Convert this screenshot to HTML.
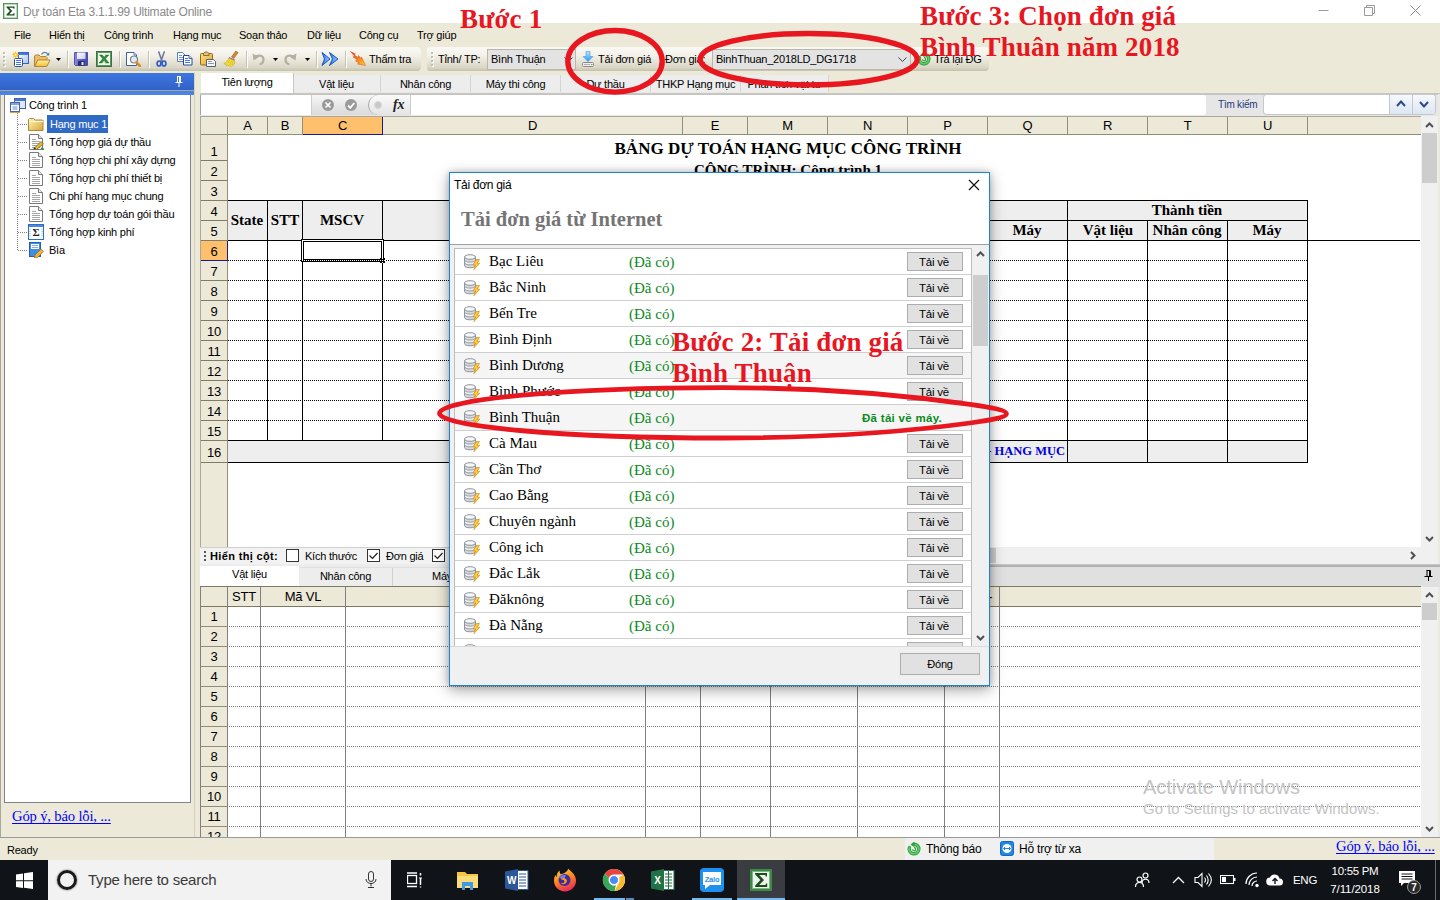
<!DOCTYPE html>
<html lang="vi"><head><meta charset="utf-8"><title>Dự toán Eta</title>
<style>
html,body{margin:0;padding:0}
body{width:1440px;height:900px;position:relative;overflow:hidden;background:#ECE9D8;font-family:"Liberation Sans",sans-serif;font-size:11px;color:#000;letter-spacing:-.22px}
.sf,.red,.th,.row .n,.row .s{letter-spacing:0}
.a{position:absolute}
.t{position:absolute;white-space:nowrap;line-height:14px;font-size:11px;letter-spacing:-.22px}
.sf{font-family:"Liberation Serif",serif}
.red{letter-spacing:.15px;position:absolute;white-space:nowrap;font-family:"Liberation Serif",serif;font-weight:bold;color:#E8161F;font-size:27px;line-height:30px;letter-spacing:.15px}
.ch{position:absolute;top:117px;height:17px;line-height:17px;text-align:center;font-size:13px;border-right:1px solid #918E79;box-sizing:border-box}
.rh{position:absolute;left:201px;width:27px;text-align:center;font-size:13px;border-bottom:1px solid #807D66;border-right:1px solid #918E79;box-sizing:border-box}
.th{position:absolute;font-family:"Liberation Serif",serif;font-weight:bold;font-size:15px;text-align:center;white-space:nowrap}
.tab{position:absolute;top:75px;height:17px;line-height:18px;text-align:center;font-size:11px;background:#EDEDED;border-right:1px solid #D4D4D4;box-sizing:border-box;white-space:nowrap}
.row{position:absolute;left:455px;width:516px;height:25px;border-bottom:1px solid #CFCFCF;background:#fff}
.row .n{position:absolute;left:34px;top:3px;font-family:"Liberation Serif",serif;font-size:15px;line-height:18px;white-space:nowrap}
.row .s{position:absolute;left:174px;top:4px;font-family:"Liberation Serif",serif;font-size:15px;line-height:18px;color:#0B8A1C;white-space:nowrap}
.row .b{position:absolute;left:452px;top:3px;width:56px;height:19px;box-sizing:border-box;border:1px solid #ADADAD;background:#E1E1E1;font-size:11.5px;line-height:18px;text-align:center;text-indent:-2px}
.row svg{position:absolute;left:9px;top:5px}
.brh{position:absolute;left:201px;width:26px;text-align:center;font-size:13px;line-height:20px;height:20px}
.tb{position:absolute;color:#fff;white-space:nowrap;font-size:12px}
</style></head><body>
<div class="a" style="left:0;top:0;width:1440px;height:23px;background:#fff"></div><svg class="a" style="left:3px;top:3px" width="15" height="16" viewBox="0 0 15 16"><rect x="0.5" y="0.5" width="14" height="15" fill="#fff" stroke="#2E7D32"/><rect x="1" y="1" width="13" height="14" fill="none" stroke="#7CB87F" stroke-width="1"/><path d="M3.5 3.5h8v2.2h-1l-.4-1H6.2l3 3.3-3 3.3h3.9l.4-1h1v2.2h-8v-1l3.4-3.5-3.4-3.5z" fill="#1B4D1E"/></svg><div class="t" style="left:23px;top:5px;font-size:12px;line-height:15px;color:#8A8A8A">Dự toán Eta 3.1.1.99 Ultimate Online</div><svg class="a" style="left:1300px;top:-1px" width="140" height="23" viewBox="0 0 140 23"><path d="M18.5 11.5h10" stroke="#9A9A9A" fill="none"/><path d="M64.5 8.5h8v8h-8zM66.5 8.5v-2h8v8h-2" stroke="#9A9A9A" fill="none"/><path d="M110.5 6.5l10 10M120.5 6.5l-10 10" stroke="#8A8A8A" fill="none"/></svg><div class="t" style="left:14px;top:28px">File</div><div class="t" style="left:49px;top:28px">Hiển thị</div><div class="t" style="left:104px;top:28px">Công trình</div><div class="t" style="left:173px;top:28px">Hạng mục</div><div class="t" style="left:239px;top:28px">Soạn thảo</div><div class="t" style="left:307px;top:28px">Dữ liệu</div><div class="t" style="left:359px;top:28px">Công cụ</div><div class="t" style="left:417px;top:28px">Trợ giúp</div>
<div class="a" style="left:0px;top:47px;width:421px;height:24px;background:linear-gradient(#FAF9F5 0%,#F3F1E8 35%,#DAD7C6 85%,#C4C1AC 100%);border-radius:0 4px 4px 0;border-radius:0 4px 4px 3px"></div><div class="a" style="left:427px;top:47px;width:562px;height:24px;background:linear-gradient(#FAF9F5 0%,#F3F1E8 35%,#DAD7C6 85%,#C4C1AC 100%);border-radius:0 4px 4px 0;border-radius:3px 4px 4px 3px"></div><div class="a" style="left:3px;top:52px;width:2px;height:2px;background:#C1BEB3"></div><div class="a" style="left:4px;top:53px;width:2px;height:2px;background:#fff"></div><div class="a" style="left:3px;top:52px;width:2px;height:2px;background:#C1BEB3"></div><div class="a" style="left:3px;top:56px;width:2px;height:2px;background:#C1BEB3"></div><div class="a" style="left:4px;top:57px;width:2px;height:2px;background:#fff"></div><div class="a" style="left:3px;top:56px;width:2px;height:2px;background:#C1BEB3"></div><div class="a" style="left:3px;top:60px;width:2px;height:2px;background:#C1BEB3"></div><div class="a" style="left:4px;top:61px;width:2px;height:2px;background:#fff"></div><div class="a" style="left:3px;top:60px;width:2px;height:2px;background:#C1BEB3"></div><div class="a" style="left:3px;top:64px;width:2px;height:2px;background:#C1BEB3"></div><div class="a" style="left:4px;top:65px;width:2px;height:2px;background:#fff"></div><div class="a" style="left:3px;top:64px;width:2px;height:2px;background:#C1BEB3"></div><div class="a" style="left:431px;top:52px;width:2px;height:2px;background:#C1BEB3"></div><div class="a" style="left:432px;top:53px;width:2px;height:2px;background:#fff"></div><div class="a" style="left:431px;top:52px;width:2px;height:2px;background:#C1BEB3"></div><div class="a" style="left:431px;top:56px;width:2px;height:2px;background:#C1BEB3"></div><div class="a" style="left:432px;top:57px;width:2px;height:2px;background:#fff"></div><div class="a" style="left:431px;top:56px;width:2px;height:2px;background:#C1BEB3"></div><div class="a" style="left:431px;top:60px;width:2px;height:2px;background:#C1BEB3"></div><div class="a" style="left:432px;top:61px;width:2px;height:2px;background:#fff"></div><div class="a" style="left:431px;top:60px;width:2px;height:2px;background:#C1BEB3"></div><div class="a" style="left:431px;top:64px;width:2px;height:2px;background:#C1BEB3"></div><div class="a" style="left:432px;top:65px;width:2px;height:2px;background:#fff"></div><div class="a" style="left:431px;top:64px;width:2px;height:2px;background:#C1BEB3"></div><svg class="a" style="left:12px;top:51px" width="17" height="16" viewBox="0 0 17 16"><defs><linearGradient id="gw" x1="0" y1="0" x2="1" y2="1"><stop offset="0" stop-color="#FFFFFF"/><stop offset="1" stop-color="#A9C1F2"/></linearGradient></defs><rect x="6.5" y="1.5" width="10" height="11" fill="url(#gw)" stroke="#3C62B8"/><rect x="7" y="2" width="9" height="2" fill="#3F7AE4"/><rect x="2.5" y="7.5" width="8" height="8" rx="1" fill="#fff" stroke="#2F4F9F"/><path d="M4 9.5h5M4 11.5h5M4 13.5h5" stroke="#3F78E0" shape-rendering="crispEdges"/><path d="M3.5 0l.9 2.300 2.100-1.300-1.100 2.100 2.300.6-2.300.7 1.100 2.100-2.100-1.200-.9 2.200-.8-2.200-2.100 1.200 1.100-2.100-2.200-.7 2.200-.6-1.100-2.100 2.100 1.300z" fill="#F7C21C"/><circle cx="3.5" cy="3.700" r="1" fill="#FFF6C8"/></svg><svg class="a" style="left:34px;top:51px" width="17" height="16" viewBox="0 0 17 16"><defs><linearGradient id="gf" x1="0" y1="0" x2="0" y2="1"><stop offset="0" stop-color="#FFF0A0"/><stop offset="1" stop-color="#F3C12C"/></linearGradient></defs><path d="M0.5 15.5v-10.5l1-1h3.5l1.5 1.5h5.5l1 1v2" fill="#E9C06A" stroke="#B4813E"/><path d="M0.700 15.5l3-6.5h12.300l-3.200 6.5z" fill="url(#gf)" stroke="#B4813E" stroke-linejoin="round"/><path d="M7.5 3.5c1.5-2.800 5-2.800 6.5 0" fill="none" stroke="#5F8E9E" stroke-width="1.100"/><path d="M15.300 1.200v3.300h-3.300z" fill="#4F8494"/></svg><svg class="a" style="left:56px;top:58px" width="5" height="3" viewBox="0 0 5 3"><path d="M0 0h5L2.5 3z" fill="#000"/></svg><div class="a" style="left:67px;top:51px;width:1px;height:16px;background:#C5C2B8"></div><div class="a" style="left:68px;top:52px;width:1px;height:16px;background:#fff"></div><svg class="a" style="left:74px;top:52px" width="14" height="14" viewBox="0 0 14 14"><defs><linearGradient id="gs" x1="0" y1="0" x2="1" y2="0"><stop offset="0" stop-color="#8A8AE8"/><stop offset=".5" stop-color="#5C5CCC"/><stop offset="1" stop-color="#4646B0"/></linearGradient><linearGradient id="gl" x1="0" y1="0" x2="1" y2="1"><stop offset="0" stop-color="#FFFFFF"/><stop offset="1" stop-color="#C9CDE8"/></linearGradient></defs><path d="M0.5 0.5h13v13h-12l-1-1z" fill="url(#gs)" stroke="#3A3A9A" stroke-width=".8"/><rect x="3" y="0.5" width="8.5" height="6.5" fill="url(#gl)"/><rect x="4" y="9" width="6.5" height="4.800" fill="#2C2C5E"/><rect x="7.5" y="10" width="2" height="3" fill="#E8E8F4"/></svg><svg class="a" style="left:96px;top:51px" width="16" height="16" viewBox="0 0 16 16"><rect x="0.5" y="0.5" width="15" height="15" fill="#5E9A5E" stroke="#3C703C"/><rect x="2" y="2" width="12" height="12" fill="#F1F8EE"/><path d="M3 11.5h10M9.5 3v10" stroke="#CFE2CC"/><path d="M3.5 4h2.800l1.800 2.300 2-2.300h2.700l-3.300 3.700 3.5 4.300h-2.800l-2.100-2.800-2.300 2.800h-2.700l3.600-4.300z" fill="#2E8E3A" stroke="#1F6A28" stroke-width=".5"/></svg><div class="a" style="left:119px;top:51px;width:1px;height:16px;background:#C5C2B8"></div><div class="a" style="left:120px;top:52px;width:1px;height:16px;background:#fff"></div><svg class="a" style="left:126px;top:51px" width="16" height="16" viewBox="0 0 16 16"><path d="M0.5 1.5h7.5l2.5 2.5v10.5h-10z" fill="#fff" stroke="#3F5FAE"/><path d="M8 1.5v2.5h2.5" fill="#DCE6F8" stroke="#3F5FAE" stroke-width=".8"/><circle cx="8" cy="8.5" r="3.5" fill="#DDEBFA" stroke="#7A8088" stroke-width="1.200"/><path d="M4.5 0.5" /><path d="M10.5 11.300l3.300 3.5" stroke="#E08A1E" stroke-width="2.600" stroke-linecap="round"/></svg><div class="a" style="left:148px;top:51px;width:1px;height:16px;background:#C5C2B8"></div><div class="a" style="left:149px;top:52px;width:1px;height:16px;background:#fff"></div><svg class="a" style="left:156px;top:51px" width="11" height="16" viewBox="0 0 11 16"><path d="M2.800 1l3.300 9.5M8.200 1l-3.300 9.5" stroke="#6E7A96" stroke-width="1.600" fill="none" stroke-linecap="round"/><ellipse cx="3" cy="12.5" rx="1.900" ry="2.5" fill="none" stroke="#2F5CCB" stroke-width="1.700"/><ellipse cx="8" cy="12.5" rx="1.900" ry="2.5" fill="none" stroke="#2F5CCB" stroke-width="1.700"/></svg><svg class="a" style="left:177px;top:52px" width="16" height="14" viewBox="0 0 16 14"><path d="M0.5 0.5h5l2.5 2.5v6.5h-7.5z" fill="#fff" stroke="#5C7CC0"/><path d="M2 3.5h3M2 5.5h4M2 7.5h4" stroke="#6E94DC" shape-rendering="crispEdges"/><path d="M6.5 3.5h5.5l3 3v6.5h-8.5z" fill="#fff" stroke="#27469A"/><path d="M12 3.5v3h3" fill="#D6E2F8" stroke="#27469A" stroke-width=".8"/><path d="M8 6.5h3M8 8.5h5M8 10.5h5" stroke="#3F78E0" shape-rendering="crispEdges"/></svg><svg class="a" style="left:200px;top:51px" width="17" height="16" viewBox="0 0 17 16"><defs><linearGradient id="gp" x1="0" y1="0" x2="1" y2="1"><stop offset="0" stop-color="#FFE28A"/><stop offset="1" stop-color="#E8A21C"/></linearGradient></defs><rect x="0.5" y="2.5" width="12" height="11.5" rx="1" fill="url(#gp)" stroke="#8E6A1E"/><path d="M3.5 4.5v-2l1.5-1.5h2.5l1.5 1.5v2z" fill="#D9C58A" stroke="#7A5A1A" stroke-width=".8"/><path d="M6.5 8.5h7l2 2v5h-9z" fill="#F4F6FA" stroke="#55607A"/><path d="M8 10.5h4M8 12.5h6" stroke="#8C96AC" shape-rendering="crispEdges"/></svg><svg class="a" style="left:223px;top:50px" width="16" height="17" viewBox="0 0 16 17"><path d="M12.800 1l2.300 1.600-4.300 6-2.300-1.600z" fill="#C98A32" stroke="#9A651C" stroke-width=".6"/><path d="M6.200 7l5.600 2.600-.5 1.300-5.700-2.600z" fill="#8F6FC0"/><path d="M5.800 8.200l5.800 2.600c.6 1.200.2 2.400-.3 3.200l-2.800 2.5-1.300-1-.8 1-1.800-1.300-1.200.5-1.200-1.600-1.400-.2c2.200-1.400 3.800-3.200 5-5.700z" fill="#F5DC3A" stroke="#C4A41C" stroke-width=".6"/><path d="M4 13.5l3-3.5M6.300 14.800l2.700-4M8.800 15l1.5-3.5" stroke="#CDB022" stroke-width=".6"/></svg><div class="a" style="left:246px;top:51px;width:1px;height:16px;background:#C5C2B8"></div><div class="a" style="left:247px;top:52px;width:1px;height:16px;background:#fff"></div><svg class="a" style="left:252px;top:52px" width="14" height="13" viewBox="0 0 14 13"><path d="M3 5.5c3.5-3.5 9-2 8.5 3-.3 2.300-2 3.5-4 4" fill="none" stroke="#B3B0A2" stroke-width="2.200"/><path d="M0.5 1.5l1 7 5.5-3.5z" fill="#B3B0A2"/></svg><svg class="a" style="left:273px;top:58px" width="5" height="3" viewBox="0 0 5 3"><path d="M0 0h5L2.5 3z" fill="#000"/></svg><svg class="a" style="left:283px;top:52px" width="14" height="13" viewBox="0 0 14 13"><path d="M11 5.5c-3.5-3.5-9-2-8.5 3 .3 2.300 2 3.5 4 4" fill="none" stroke="#B3B0A2" stroke-width="2.200"/><path d="M13.5 1.5l-1 7-5.5-3.5z" fill="#B3B0A2"/></svg><svg class="a" style="left:305px;top:58px" width="5" height="3" viewBox="0 0 5 3"><path d="M0 0h5L2.5 3z" fill="#000"/></svg><div class="a" style="left:316px;top:51px;width:1px;height:16px;background:#C5C2B8"></div><div class="a" style="left:317px;top:52px;width:1px;height:16px;background:#fff"></div><svg class="a" style="left:321px;top:51px" width="18" height="16" viewBox="0 0 18 16"><defs><linearGradient id="gb" x1="0" y1="0" x2="1" y2="0"><stop offset="0" stop-color="#2C7AF2"/><stop offset="1" stop-color="#9CCBFF"/></linearGradient></defs><path d="M1 1.5l8 6.5-8 6.5 2.5-6.5z" fill="url(#gb)" stroke="#1452C8" stroke-width="1" stroke-linejoin="round"/><path d="M8.5 1.5l8.5 6.5-8.5 6.5 3-6.5z" fill="url(#gb)" stroke="#1452C8" stroke-width="1" stroke-linejoin="round"/></svg><div class="a" style="left:345px;top:51px;width:1px;height:16px;background:#C5C2B8"></div><div class="a" style="left:346px;top:52px;width:1px;height:16px;background:#fff"></div><svg class="a" style="left:350px;top:51px" width="16" height="16" viewBox="0 0 16 16"><defs><linearGradient id="gt" x1="0" y1="0" x2="1" y2="1"><stop offset="0" stop-color="#E8351C"/><stop offset=".55" stop-color="#F7861E"/><stop offset="1" stop-color="#FFD21E"/></linearGradient></defs><path d="M0.5 0.5l5 2.5-1.200 1 3.700 2.5.5-2 2.5 3 .5-1.5 4 8.5-8-1.5 2-1-4-2 1.5-1.5-4-2.5 1.5-.8z" fill="url(#gt)" stroke="#D8501A" stroke-width=".5"/></svg><div class="t" style="left:369px;top:52px">Thẩm tra</div><div class="t" style="left:438px;top:52px">Tỉnh/ TP:</div><div class="a" style="left:487px;top:49px;width:89px;height:21px;box-sizing:border-box;border:1px solid #B9B7AC;background:#E3E3E3"></div><div class="t" style="left:491px;top:52px">Bình Thuận</div><svg class="a" style="left:564px;top:57px" width="9" height="6" viewBox="0 0 9 6"><path d="M0.5 0.5l4 4 4-4" fill="none" stroke="#444"/></svg><svg class="a" style="left:581px;top:51px" width="15" height="17" viewBox="0 0 15 17"><defs><linearGradient id="ga" x1="0" y1="0" x2="0" y2="1"><stop offset="0" stop-color="#BFE3FC"/><stop offset="1" stop-color="#2E96EE"/></linearGradient></defs><path d="M5 0.5h4v5h3l-5 5-5-5h3z" fill="url(#ga)" stroke="#3B9AE8" stroke-width=".6"/><rect x="1.5" y="11.5" width="11" height="4" rx="1" fill="#EDEDED" stroke="#8A8A8A"/><path d="M3 13.5h6" stroke="#B0B0B0"/><rect x="10" y="13" width="1.5" height="1" fill="#3DC04A"/></svg><div class="t" style="left:598px;top:52px">Tải đơn giá</div><div class="t" style="left:665px;top:52px">Đơn giá:</div><div class="a" style="left:712px;top:49px;width:199px;height:21px;box-sizing:border-box;border:1px solid #B9B7AC;background:#E3E3E3"></div><div class="t" style="left:716px;top:52px">BinhThuan_2018LD_DG1718</div><svg class="a" style="left:898px;top:57px" width="9" height="6" viewBox="0 0 9 6"><path d="M0.5 0.5l4 4 4-4" fill="none" stroke="#444"/></svg><svg class="a" style="left:917px;top:52px" width="14" height="14" viewBox="0 0 14 14"><path d="M7 2.200a4.800 4.800 0 1 1-4.600 3.5" fill="none" stroke="#2E9E3C" stroke-width="3.400" stroke-linecap="round"/><path d="M7 2.200a4.800 4.800 0 1 1-4.600 3.5" fill="none" stroke="#5FD068" stroke-width="1.600" stroke-linecap="round"/><path d="M7.5 -0.5v5.800l-4-2.900z" fill="#2E9E3C"/><path d="M5.5 7.300a1.600 1.600 0 1 0 1.5-1.700" fill="none" stroke="#2E9E3C" stroke-width="1.200"/></svg><div class="t" style="left:934px;top:52px">Trả lại ĐG</div>
<div class="a" style="left:0;top:72px;width:195px;height:766px;background:#ECE9D8;border-right:1px solid #D6D2C2;box-sizing:border-box"></div><div class="a" style="left:0;top:73px;width:194px;height:17px;background:linear-gradient(#3E76E0,#2F62C8)"></div><div class="a" style="left:0;top:90px;width:194px;height:5px;background:linear-gradient(#A8A890 0,#A8A890 20%,#4A80E6 20%,#4D84EA 100%)"></div><svg class="a" style="left:175px;top:76px" width="8" height="11" viewBox="0 0 8 11"><path d="M2 0.5h4M2.5 0.5v5.5M5.5 0.5v5.5M4.5 0v6M0.5 6.5h7M4 7v4" stroke="#fff" fill="none"/></svg><div class="a" style="left:4px;top:95px;width:187px;height:708px;background:#fff;border:1px solid #7F858D;border-top:none;box-sizing:border-box"></div><div class="a" style="left:0;top:95px;width:1px;height:743px;background:#A9A69A"></div><svg class="a" style="left:0;top:95px" width="60" height="170" viewBox="0 0 60 170" shape-rendering="crispEdges"><path d="M17.5 18v138" stroke="#808080" stroke-dasharray="1 1" fill="none"/><path d="M18 29.5h10" stroke="#808080" stroke-dasharray="1 1" fill="none"/><path d="M18 47.5h10" stroke="#808080" stroke-dasharray="1 1" fill="none"/><path d="M18 65.5h10" stroke="#808080" stroke-dasharray="1 1" fill="none"/><path d="M18 83.5h10" stroke="#808080" stroke-dasharray="1 1" fill="none"/><path d="M18 101.5h10" stroke="#808080" stroke-dasharray="1 1" fill="none"/><path d="M18 119.5h10" stroke="#808080" stroke-dasharray="1 1" fill="none"/><path d="M18 137.5h10" stroke="#808080" stroke-dasharray="1 1" fill="none"/><path d="M18 155.5h10" stroke="#808080" stroke-dasharray="1 1" fill="none"/></svg><svg class="a" style="left:9px;top:97px" width="17" height="16" viewBox="0 0 17 16"><rect x="5.5" y="1.5" width="11" height="10" fill="#DCE8FB" stroke="#4A62A8"/><rect x="6" y="2" width="10" height="2" fill="#3F78E0"/><rect x="1.5" y="5.5" width="9" height="9" fill="#fff" stroke="#4A62A8"/><rect x="2" y="6" width="8" height="2" fill="#7FA2E4"/><path d="M3.5 10h5M3.5 12h5" stroke="#6A8ACB"/><path d="M1 15.5h10" stroke="#D8A838"/></svg><div class="t" style="left:29px;top:98px">Công trình 1</div><div class="a" style="left:47px;top:115px;width:61px;height:18px;background:#316AC5"></div><svg class="a" style="left:28px;top:118px" width="16" height="13" viewBox="0 0 16 13"><defs><linearGradient id="gfo" x1="0" y1="0" x2="1" y2="1"><stop offset="0" stop-color="#FFF6B8"/><stop offset="1" stop-color="#D9A637"/></linearGradient></defs><path d="M0.5 12.5v-11l1-1h4l1.5 1.5h7.5l.5.5v10z" fill="url(#gfo)" stroke="#A98A3C"/><path d="M1 3.5h14" stroke="#FFFBE0"/></svg><div class="t" style="left:50px;top:117px;color:#fff">Hạng mục 1</div><svg class="a" style="left:29px;top:134px" width="14" height="16" viewBox="0 0 14 16"><path d="M0.5 0.5h9l4 4v11h-13z" fill="#fff" stroke="#7A7A7A"/><path d="M9.5 0.5v4h4" fill="#E8E8E8" stroke="#7A7A7A"/><path d="M3 5.5h4M3 7.5h8M3 9.5h8M3 11.5h8M3 13.5h8" stroke="#A6A6A6" shape-rendering="crispEdges"/></svg><svg class="a" style="left:33px;top:139px" width="12" height="11" viewBox="0 0 12 11"><path d="M1 9.5l7-7 2.5 2.5-7 5.5z" fill="#E8B830" stroke="#6A5A1A" stroke-width=".7"/><path d="M0.5 10.5l2.5-.5-2-2z" fill="#333"/><path d="M8 9l3 1.5" stroke="#3A8A3A" stroke-width="1.5"/></svg><div class="t" style="left:49px;top:135px">Tổng hợp giá dự thầu</div><svg class="a" style="left:29px;top:152px" width="14" height="16" viewBox="0 0 14 16"><path d="M0.5 0.5h9l4 4v11h-13z" fill="#fff" stroke="#7A7A7A"/><path d="M9.5 0.5v4h4" fill="#E8E8E8" stroke="#7A7A7A"/><path d="M3 5.5h4M3 7.5h8M3 9.5h8M3 11.5h8M3 13.5h8" stroke="#A6A6A6" shape-rendering="crispEdges"/></svg><div class="t" style="left:49px;top:153px">Tổng hợp chi phí xây dựng</div><svg class="a" style="left:29px;top:170px" width="14" height="16" viewBox="0 0 14 16"><path d="M0.5 0.5h9l4 4v11h-13z" fill="#fff" stroke="#7A7A7A"/><path d="M9.5 0.5v4h4" fill="#E8E8E8" stroke="#7A7A7A"/><path d="M3 5.5h4M3 7.5h8M3 9.5h8M3 11.5h8M3 13.5h8" stroke="#A6A6A6" shape-rendering="crispEdges"/></svg><div class="t" style="left:49px;top:171px">Tổng hợp chi phí thiết bị</div><svg class="a" style="left:29px;top:188px" width="14" height="16" viewBox="0 0 14 16"><path d="M0.5 0.5h9l4 4v11h-13z" fill="#fff" stroke="#7A7A7A"/><path d="M9.5 0.5v4h4" fill="#E8E8E8" stroke="#7A7A7A"/><path d="M3 5.5h4M3 7.5h8M3 9.5h8M3 11.5h8M3 13.5h8" stroke="#A6A6A6" shape-rendering="crispEdges"/></svg><div class="t" style="left:49px;top:189px">Chi phí hạng mục chung</div><svg class="a" style="left:29px;top:206px" width="14" height="16" viewBox="0 0 14 16"><path d="M0.5 0.5h9l4 4v11h-13z" fill="#fff" stroke="#7A7A7A"/><path d="M9.5 0.5v4h4" fill="#E8E8E8" stroke="#7A7A7A"/><path d="M3 5.5h4M3 7.5h8M3 9.5h8M3 11.5h8M3 13.5h8" stroke="#A6A6A6" shape-rendering="crispEdges"/></svg><div class="t" style="left:49px;top:207px">Tổng hợp dự toán gói thầu</div><svg class="a" style="left:28px;top:224px" width="16" height="16" viewBox="0 0 16 16"><rect x="0.5" y="0.5" width="15" height="15" fill="#fff" stroke="#2E6EC8"/><rect x="1" y="1" width="14" height="2" fill="#4A8AE0"/><text x="8" y="12" font-size="11" font-weight="bold" text-anchor="middle" font-family="Liberation Serif,serif" fill="#222">Σ</text><path d="M2 5v8M14 5v8" stroke="#8AB0E8" stroke-dasharray="1 1"/></svg><div class="t" style="left:49px;top:225px">Tổng hợp kinh phí</div><svg class="a" style="left:28px;top:242px" width="17" height="16" viewBox="0 0 17 16"><rect x="1.5" y="0.5" width="11" height="14" fill="#3E8EE8" stroke="#1E5FB8"/><rect x="3" y="2" width="8" height="5" fill="#fff"/><path d="M4 3.5h6M4 5.5h6" stroke="#8AA8D8"/><path d="M7 13l6-6 2.5 2.5-6 6-3 .5z" fill="#F2B23A" stroke="#9A6A18" stroke-width=".7"/></svg><div class="t" style="left:49px;top:243px">Bìa</div><div class="t sf" style="left:12px;top:808px;font-size:14.67px;line-height:17px;letter-spacing:-.18px;color:#0000FF;text-decoration:underline;text-decoration-skip-ink:none;text-underline-offset:2px">Góp ý, báo lỗi, ...</div>
<div class="a" style="left:200px;top:72px;width:1240px;height:20px;background:#ECE9D8"></div><div class="tab" style="left:293px;width:88px">Vật liệu</div><div class="tab" style="left:381px;width:90px">Nhân công</div><div class="tab" style="left:471px;width:90px">Máy thi công</div><div class="tab" style="left:561px;width:90px">Dự thầu</div><div class="tab" style="left:651px;width:90px">THKP Hạng mục</div><div class="tab" style="left:741px;width:88px">Phân tích vật tư</div><div class="a" style="left:745px;top:75px;width:80px;height:6px;background:#EDEDED"></div><div class="a" style="left:200px;top:93px;width:1240px;height:2px;background:linear-gradient(#D0D0D0,#A8A8A8)"></div><div class="a" style="left:201px;top:73px;width:93px;height:20px;background:#fff;text-align:center;line-height:18px;font-size:11px;border-right:1px solid #C8C8C8;box-sizing:border-box">Tiên lượng</div><div class="a" style="left:200px;top:94px;width:1240px;height:22px;background:#E6E6E6;border-top:1px solid #C4C4C4;box-sizing:border-box"></div><div class="a" style="left:311px;top:95px;width:99px;height:20px;background:linear-gradient(#F6F6F6,#DADADA);border-left:1px solid #CDCDCD;box-sizing:border-box"></div><div class="a" style="left:368px;top:95px;width:42px;height:20px;background:linear-gradient(#FAFAFA,#E4E4E4);border-radius:10px 0 0 10px;border-left:1px solid #A8A8A8;box-sizing:border-box"></div><div class="a" style="left:200px;top:95px;width:111px;height:20px;background:#fff;border-left:1px solid #9AA4B4;box-sizing:border-box"></div><div class="a" style="left:410px;top:95px;width:796px;height:20px;background:#fff;border-radius:0 3px 3px 0;border-left:1px solid #CDCDCD;box-sizing:border-box"></div><svg class="a" style="left:321px;top:98px" width="14" height="14" viewBox="0 0 14 14"><circle cx="7" cy="7" r="6" fill="#9A9A9A"/><path d="M4.5 4.5l5 5M9.5 4.5l-5 5" stroke="#fff" stroke-width="1.700"/></svg><svg class="a" style="left:344px;top:98px" width="14" height="14" viewBox="0 0 14 14"><circle cx="7" cy="7" r="6" fill="#9A9A9A"/><path d="M4 7.5l2.300 2.300 4-4.800" stroke="#fff" stroke-width="1.800" fill="none"/></svg><svg class="a" style="left:374px;top:101px" width="8" height="8" viewBox="0 0 8 8"><circle cx="4" cy="4" r="3.5" fill="#C8C8C8" stroke="#D8D8D8"/></svg><div class="t sf" style="left:393px;top:97px;font-size:14px;line-height:16px;font-style:italic;font-weight:bold;color:#222">fx</div><div class="t" style="left:1218px;top:98px;color:#1E3A78;font-size:10px">Tìm kiếm</div><div class="a" style="left:1264px;top:95px;width:171px;height:19px;background:#fff;border-radius:3px;box-shadow:0 0 0 1px #C8C8C8"></div><div class="a" style="left:1389px;top:95px;width:46px;height:19px;background:linear-gradient(#F6F9FD,#DCE6F4);border-radius:0 3px 3px 0;border-left:1px solid #C8C8C8;box-sizing:border-box"></div><div class="a" style="left:1412px;top:95px;width:1px;height:19px;background:#C8C8C8"></div><svg class="a" style="left:1396px;top:100px" width="10" height="7" viewBox="0 0 10 7"><path d="M1 6l4-4.5 4 4.5" fill="none" stroke="#2A4A8A" stroke-width="2"/></svg><svg class="a" style="left:1419px;top:101px" width="10" height="7" viewBox="0 0 10 7"><path d="M1 1l4 4.5 4-4.5" fill="none" stroke="#2A4A8A" stroke-width="2"/></svg><div class="a" style="left:200px;top:116px;width:1221px;height:431px;background:#fff"></div><div class="a" style="left:200px;top:116px;width:1221px;height:1px;background:#ACA899"></div><div class="a" style="left:200px;top:116px;width:1px;height:431px;background:#ACA899"></div><div class="a" style="left:201px;top:117px;width:27px;height:430px;background:#ECE9D8;border-right:1px solid #918E79;box-sizing:border-box"></div><div class="a" style="left:201px;top:117px;width:1220px;height:17px;background:#ECE9D8;border-bottom:1px solid #918E79"></div><div class="a" style="left:201px;top:117px;width:27px;height:17px;border-right:1px solid #918E79;box-sizing:border-box"></div><div class="ch" style="left:228px;width:40px">A</div><div class="ch" style="left:268px;width:35px">B</div><div class="ch" style="left:303px;width:80px;background:#FFC06E;border-right:1px solid #1A1A8A;border-bottom:1px solid #1A1A8A;height:18px">C</div><div class="ch" style="left:383px;width:300px">D</div><div class="ch" style="left:683px;width:65px">E</div><div class="ch" style="left:748px;width:80px">M</div><div class="ch" style="left:828px;width:80px">N</div><div class="ch" style="left:908px;width:80px">P</div><div class="ch" style="left:988px;width:80px">Q</div><div class="ch" style="left:1068px;width:80px">R</div><div class="ch" style="left:1148px;width:80px">T</div><div class="ch" style="left:1228px;width:80px">U</div><div class="rh" style="top:135px;height:26px;line-height:33px;">1</div><div class="rh" style="top:161px;height:20px;line-height:21px;">2</div><div class="rh" style="top:181px;height:20px;line-height:21px;">3</div><div class="rh" style="top:201px;height:20px;line-height:21px;">4</div><div class="rh" style="top:221px;height:20px;line-height:21px;">5</div><div class="rh" style="top:241px;height:20px;line-height:21px;background:#FFC06E;border-right:1px solid #1A1A8A;border-bottom:1px solid #1A1A8A;">6</div><div class="rh" style="top:261px;height:20px;line-height:21px;">7</div><div class="rh" style="top:281px;height:20px;line-height:21px;">8</div><div class="rh" style="top:301px;height:20px;line-height:21px;">9</div><div class="rh" style="top:321px;height:20px;line-height:21px;">10</div><div class="rh" style="top:341px;height:20px;line-height:21px;">11</div><div class="rh" style="top:361px;height:20px;line-height:21px;">12</div><div class="rh" style="top:381px;height:20px;line-height:21px;">13</div><div class="rh" style="top:401px;height:20px;line-height:21px;">14</div><div class="rh" style="top:421px;height:20px;line-height:21px;">15</div><div class="rh" style="top:441px;height:22px;line-height:23px;">16</div>
<div class="th" style="left:588px;top:140px;width:400px;font-size:17px;line-height:18px">BẢNG DỰ TOÁN HẠNG MỤC CÔNG TRÌNH</div><div class="th" style="left:588px;top:161px;width:400px;font-size:15px;line-height:18px">CÔNG TRÌNH: Công trình 1</div><div class="a" style="left:228px;top:201px;width:1080px;height:39px;background:#EEEEEE"></div><div class="a" style="left:228px;top:441px;width:1080px;height:21px;background:#EEEEEE"></div><svg class="a" style="left:200px;top:116px" width="1221" height="431" viewBox="200 116 1221 431" shape-rendering="crispEdges"><path d="M228 260.5H1308" stroke="#000" stroke-dasharray="1 1" fill="none"/><path d="M228 280.5H1308" stroke="#000" stroke-dasharray="1 1" fill="none"/><path d="M228 300.5H1308" stroke="#000" stroke-dasharray="1 1" fill="none"/><path d="M228 320.5H1308" stroke="#000" stroke-dasharray="1 1" fill="none"/><path d="M228 340.5H1308" stroke="#000" stroke-dasharray="1 1" fill="none"/><path d="M228 360.5H1308" stroke="#000" stroke-dasharray="1 1" fill="none"/><path d="M228 380.5H1308" stroke="#000" stroke-dasharray="1 1" fill="none"/><path d="M228 400.5H1308" stroke="#000" stroke-dasharray="1 1" fill="none"/><path d="M228 420.5H1308" stroke="#000" stroke-dasharray="1 1" fill="none"/><path d="M228 200.5H1308M228 240.5H1420M228 440.5H1308M228 462.5H1308M826 220.5H1308" stroke="#000" fill="none"/><path d="M267.5 200V441" stroke="#000" fill="none"/><path d="M302.5 200V441" stroke="#000" fill="none"/><path d="M382.5 200V441" stroke="#000" fill="none"/><path d="M682.5 200V441" stroke="#000" fill="none"/><path d="M746.5 200V441" stroke="#000" fill="none"/><path d="M826.5 200V441" stroke="#000" fill="none"/><path d="M908.5 200V441" stroke="#000" fill="none"/><path d="M988.5 200V441" stroke="#000" fill="none"/><path d="M1067.5 200V463" stroke="#000" fill="none"/><path d="M1147.5 220V463" stroke="#000" fill="none"/><path d="M1227.5 220V463" stroke="#000" fill="none"/><path d="M1307.5 200V463" stroke="#000" fill="none"/><rect x="301.5" y="239.5" width="82" height="22" fill="none" stroke="#000"/><rect x="302.5" y="240.5" width="80" height="20" fill="none" stroke="#fff"/><rect x="303.5" y="241.5" width="78" height="18" fill="#fff" stroke="#000"/><path d="M303 260.5H381" stroke="#000" stroke-dasharray="1 1" fill="none"/><rect x="380" y="258" width="5" height="5" fill="#000"/><path d="M382.5 258v5M380 260.5h5" stroke="#fff" stroke-dasharray="1 1" fill="none"/></svg><div class="th" style="left:187px;width:120px;top:211px;line-height:18px;font-size:15px">State</div><div class="th" style="left:225px;width:120px;top:211px;line-height:18px;font-size:15px">STT</div><div class="th" style="left:282px;width:120px;top:211px;line-height:18px;font-size:15px">MSCV</div><div class="th" style="left:1127px;width:120px;top:201px;line-height:18px;font-size:15px">Thành tiền</div><div class="th" style="left:967px;width:120px;top:221px;line-height:18px;font-size:15px">Máy</div><div class="th" style="left:1048px;width:120px;top:221px;line-height:18px;font-size:15px">Vật liệu</div><div class="th" style="left:1127px;width:120px;top:221px;line-height:18px;font-size:15px">Nhân công</div><div class="th" style="left:1207px;width:120px;top:221px;line-height:18px;font-size:15px">Máy</div><div class="th" style="left:765px;width:300px;text-align:right;top:442px;line-height:18px;font-size:12.5px;color:#0000E0">TỔNG CỘNG - HẠNG MỤC</div><div class="a" style="left:1421px;top:116px;width:17px;height:431px;background:#F0F0F0"></div><div class="a" style="left:1422px;top:133px;width:15px;height:50px;background:#CDCDCD"></div><svg class="a" style="left:1425px;top:122px" width="9" height="6" viewBox="0 0 9 6"><path d="M1 5l3.5-3.5 3.5 3.5" fill="none" stroke="#505050" stroke-width="2"/></svg><svg class="a" style="left:1425px;top:536px" width="9" height="6" viewBox="0 0 9 6"><path d="M1 1l3.5 3.5 3.5-3.5" fill="none" stroke="#505050" stroke-width="2"/></svg><div class="a" style="left:200px;top:547px;width:1221px;height:17px;background:#F0F0F0"></div><div class="a" style="left:700px;top:548px;width:296px;height:15px;background:#CDCDCD"></div><svg class="a" style="left:1410px;top:551px" width="6" height="9" viewBox="0 0 6 9"><path d="M1 1l3.5 3.5-3.5 3.5" fill="none" stroke="#505050" stroke-width="2"/></svg><div class="a" style="left:1421px;top:547px;width:19px;height:17px;background:#F0F0F0"></div><div class="a" style="left:1438px;top:94px;width:2px;height:744px;background:#EAE9E2"></div>
<div class="a" style="left:200px;top:547px;width:500px;height:17px;background:#F2F2F2;border-top:1px solid #D0D0D0;box-sizing:border-box"></div><div class="a" style="left:204px;top:551px;width:2px;height:2px;background:#555"></div><div class="a" style="left:204px;top:555px;width:2px;height:2px;background:#555"></div><div class="a" style="left:204px;top:559px;width:2px;height:2px;background:#555"></div><div class="t" style="left:210px;top:549px;font-weight:bold;letter-spacing:.35px">Hiển thị cột:</div><div class="a" style="left:286px;top:549px;width:13px;height:13px;box-sizing:border-box;border:1px solid #333;background:#fff"></div><div class="t" style="left:305px;top:549px">Kích thước</div><div class="a" style="left:367px;top:549px;width:13px;height:13px;box-sizing:border-box;border:1px solid #333;background:#fff"></div><svg class="a" style="left:369px;top:552px" width="9" height="8" viewBox="0 0 9 8"><path d="M0.5 3.5l3 3 5-5.5" fill="none" stroke="#222" stroke-width="1.200"/></svg><div class="t" style="left:386px;top:549px">Đơn giá</div><div class="a" style="left:432px;top:549px;width:13px;height:13px;box-sizing:border-box;border:1px solid #333;background:#fff"></div><svg class="a" style="left:434px;top:552px" width="9" height="8" viewBox="0 0 9 8"><path d="M0.5 3.5l3 3 5-5.5" fill="none" stroke="#222" stroke-width="1.200"/></svg><div class="a" style="left:200px;top:564px;width:250px;height:3px;background:#ECECEC"></div><div class="a" style="left:450px;top:564px;width:990px;height:3px;background:linear-gradient(#C8C8C8,#A8A8A8)"></div><div class="a" style="left:200px;top:567px;width:1240px;height:20px;background:#E0E0E0"></div><div class="a" style="left:200px;top:566px;width:99px;height:21px;background:#fff;text-align:center;line-height:17px;font-size:11px">Vật liệu</div><div class="a" style="left:299px;top:568px;width:94px;height:18px;background:#EDEDED;border-right:1px solid #D0D0D0;box-sizing:border-box;text-align:center;line-height:17px;font-size:11px">Nhân công</div><div class="a" style="left:393px;top:568px;width:140px;height:18px;background:#EDEDED;border-right:1px solid #D0D0D0;box-sizing:border-box;text-align:left;padding-left:39px;line-height:17px;font-size:11px">Máy thi công</div><svg class="a" style="left:1424px;top:570px" width="9" height="11" viewBox="0 0 9 11"><path d="M2.5 0.5h4M3 0.5v5.5M6.5 0.5v5.5M5.5 0v6M0.5 6.5h8M4.5 7v4" stroke="#000" fill="none"/></svg><div class="a" style="left:200px;top:586px;width:1221px;height:251px;background:#fff;border-top:1px solid #7D7A62;border-left:1px solid #808080;box-sizing:border-box"></div><div class="a" style="left:201px;top:587px;width:26px;height:250px;background:#ECE9D8;border-right:1px solid #808080"></div><div class="a" style="left:201px;top:587px;width:1220px;height:19px;background:#ECE9D8;border-bottom:1px solid #7D7A62"></div><div class="a" style="left:201px;top:587px;width:26px;height:19px;border-right:1px solid #808080"></div><svg class="a" style="left:200px;top:587px" width="1221" height="250" viewBox="200 587 1221 250" shape-rendering="crispEdges"><path d="M201 626.5H1420" stroke="#808080" stroke-dasharray="1 1" fill="none"/><path d="M201 646.5H1420" stroke="#808080" stroke-dasharray="1 1" fill="none"/><path d="M201 666.5H1420" stroke="#808080" stroke-dasharray="1 1" fill="none"/><path d="M201 686.5H1420" stroke="#808080" stroke-dasharray="1 1" fill="none"/><path d="M201 706.5H1420" stroke="#808080" stroke-dasharray="1 1" fill="none"/><path d="M201 726.5H1420" stroke="#808080" stroke-dasharray="1 1" fill="none"/><path d="M201 746.5H1420" stroke="#808080" stroke-dasharray="1 1" fill="none"/><path d="M201 766.5H1420" stroke="#808080" stroke-dasharray="1 1" fill="none"/><path d="M201 786.5H1420" stroke="#808080" stroke-dasharray="1 1" fill="none"/><path d="M201 806.5H1420" stroke="#808080" stroke-dasharray="1 1" fill="none"/><path d="M201 826.5H1420" stroke="#808080" stroke-dasharray="1 1" fill="none"/><path d="M260.5 587V837" stroke="#808080" fill="none"/><path d="M345.5 587V837" stroke="#808080" fill="none"/><path d="M645.5 587V837" stroke="#808080" fill="none"/><path d="M700.5 587V837" stroke="#808080" fill="none"/><path d="M770.5 587V837" stroke="#808080" fill="none"/><path d="M857.5 587V837" stroke="#808080" fill="none"/><path d="M944.5 587V837" stroke="#808080" fill="none"/><path d="M999.5 587V837" stroke="#808080" fill="none"/></svg><div class="a" style="left:228px;top:588px;width:32px;height:18px;line-height:18px;text-align:center;font-size:13px">STT</div><div class="a" style="left:261px;top:588px;width:84px;height:18px;line-height:18px;text-align:center;font-size:13px">Mã VL</div><div class="brh" style="top:607px;border-bottom:1px solid #8F8C78;box-sizing:border-box">1</div><div class="brh" style="top:627px;border-bottom:1px solid #8F8C78;box-sizing:border-box">2</div><div class="brh" style="top:647px;border-bottom:1px solid #8F8C78;box-sizing:border-box">3</div><div class="brh" style="top:667px;border-bottom:1px solid #8F8C78;box-sizing:border-box">4</div><div class="brh" style="top:687px;border-bottom:1px solid #8F8C78;box-sizing:border-box">5</div><div class="brh" style="top:707px;border-bottom:1px solid #8F8C78;box-sizing:border-box">6</div><div class="brh" style="top:727px;border-bottom:1px solid #8F8C78;box-sizing:border-box">7</div><div class="brh" style="top:747px;border-bottom:1px solid #8F8C78;box-sizing:border-box">8</div><div class="brh" style="top:767px;border-bottom:1px solid #8F8C78;box-sizing:border-box">9</div><div class="brh" style="top:787px;border-bottom:1px solid #8F8C78;box-sizing:border-box">10</div><div class="brh" style="top:807px;border-bottom:1px solid #8F8C78;box-sizing:border-box">11</div><div class="brh" style="top:827px;border-bottom:1px solid #8F8C78;box-sizing:border-box">12</div><div class="a sf" style="left:988px;top:590px;font-size:13px;line-height:14px;font-weight:bold">-</div><div class="a" style="left:1421px;top:587px;width:17px;height:251px;background:#F0F0F0"></div><div class="a" style="left:1422px;top:603px;width:15px;height:17px;background:#CDCDCD"></div><svg class="a" style="left:1425px;top:592px" width="9" height="6" viewBox="0 0 9 6"><path d="M1 5l3.5-3.5 3.5 3.5" fill="none" stroke="#505050" stroke-width="2"/></svg><svg class="a" style="left:1425px;top:826px" width="9" height="6" viewBox="0 0 9 6"><path d="M1 1l3.5 3.5 3.5-3.5" fill="none" stroke="#505050" stroke-width="2"/></svg><div class="a" style="left:0;top:837px;width:1440px;height:23px;background:#ECE9D8;border-top:1px solid #9A9A9A;box-sizing:border-box"></div><div class="t" style="left:7px;top:843px">Ready</div><div class="a" style="left:905px;top:838px;width:309px;height:22px;background:#F0F0F0"></div><svg class="a" style="left:907px;top:842px" width="14" height="14" viewBox="0 0 14 14"><path d="M7 2.200a4.800 4.800 0 1 1-4.600 3.5" fill="none" stroke="#2E9E3C" stroke-width="3.400" stroke-linecap="round"/><path d="M7 2.200a4.800 4.800 0 1 1-4.600 3.5" fill="none" stroke="#5FD068" stroke-width="1.600" stroke-linecap="round"/><path d="M7.5 -0.5v5.800l-4-2.900z" fill="#2E9E3C"/><path d="M5.5 7.300a1.600 1.600 0 1 0 1.5-1.700" fill="none" stroke="#2E9E3C" stroke-width="1.200"/></svg><div class="t" style="left:926px;top:842px;font-size:12px">Thông báo</div><svg class="a" style="left:1000px;top:841px" width="14" height="15" viewBox="0 0 14 15"><rect x="0.5" y="0.5" width="13" height="14" rx="2" fill="#1E88E5" stroke="#1565C0"/><circle cx="7" cy="7.5" r="4.5" fill="#fff"/><path d="M3.5 7.5h7M5 6l-1.5 1.5 1.5 1.5M9 6l1.5 1.5-1.5 1.5" stroke="#1E88E5" fill="none"/></svg><div class="t" style="left:1019px;top:842px;font-size:12px">Hỗ trợ từ xa</div><div class="t sf" style="left:1336px;top:838px;font-size:14.67px;line-height:17px;letter-spacing:-.18px;color:#0000FF;text-decoration:underline;text-decoration-skip-ink:none;text-underline-offset:2px">Góp ý, báo lỗi, ...</div>
<div class="a" style="left:0;top:860px;width:1440px;height:40px;background:#101317"></div><svg class="a" style="left:16px;top:872px" width="17" height="17" viewBox="0 0 17 17"><path d="M0 2.400l7-1v6.800h-7zM8 1.300l9-1.300v8.200h-9zM0 9.200h7v6.800l-7-1zM8 9.200h9v7.800l-9-1.300z" fill="#fff"/></svg><div class="a" style="left:48px;top:860px;width:343px;height:40px;background:#F2F2F2"></div><div class="a" style="left:57px;top:870px;width:20px;height:20px;border-radius:50%;border:3px solid #1A1A1A;box-sizing:border-box;box-shadow:0 0 2px #555"></div><div class="t" style="left:88px;top:870px;font-size:15px;line-height:20px;color:#3A3A3A">Type here to search</div><svg class="a" style="left:365px;top:871px" width="12" height="18" viewBox="0 0 12 18"><rect x="3.5" y="0.5" width="5" height="10" rx="2.5" fill="none" stroke="#333"/><path d="M1 8c0 6 10 6 10 0M6 12.5v3M3 16.5h6" fill="none" stroke="#333"/></svg><svg class="a" style="left:407px;top:872px" width="18" height="16" viewBox="0 0 18 16"><rect x="0.5" y="3.5" width="9" height="8" fill="none" stroke="#fff" stroke-width="1.300"/><path d="M0 1h10M0 14.5h10M13.5 1v2.5M13.5 6v7M13.5 14.5v1" stroke="#fff" stroke-width="1.5"/><path d="M12 6h3" stroke="#fff"/></svg><svg class="a" style="left:456px;top:869px" width="23" height="22" viewBox="0 0 23 22"><path d="M1 3h8l2 2h11v14h-21z" fill="#F6C544"/><path d="M1 7h21v12h-21z" fill="#FBDC7A"/><path d="M6 13h11v8h-3v-4h-5v4h-3z" fill="#3E9BE8"/></svg><svg class="a" style="left:505px;top:869px" width="24" height="22" viewBox="0 0 24 22"><rect x="9" y="1.5" width="14" height="19" fill="#fff" stroke="#2B579A"/><path d="M14 5h7M14 8h7M14 11h7M14 14h7M14 17h7" stroke="#2B579A"/><path d="M0 2.5l13-2.5v22l-13-2.5z" fill="#2B579A"/><text x="6.5" y="15" font-size="10" font-weight="bold" text-anchor="middle" fill="#fff" font-family="Liberation Sans,sans-serif">W</text></svg><svg class="a" style="left:553px;top:868px" width="24" height="24" viewBox="0 0 24 24"><defs><linearGradient id="gff" x1="0.2" y1="0" x2="0.6" y2="1"><stop offset="0" stop-color="#FFD43A"/><stop offset=".45" stop-color="#FF8A1E"/><stop offset="1" stop-color="#E8285A"/></linearGradient></defs><path d="M15.5 0.800c1 2 3.200 2.600 4.800 4.800 1.700 2.300 2.700 4.5 2.700 7.200 0 6-4.900 10.700-11 10.700s-11-4.700-11-10.700c0-2.200.5-4 1.5-5.800.2 1 .6 1.700 1.200 2.300-.2-2.5.8-5.300 3-6.800-.3 1.5 0 2.700.8 3.600 2.5-.3 5.5-.8 8-5.300z" fill="url(#gff)"/><circle cx="11.5" cy="12" r="6" fill="#3D2B9A"/><path d="M6 9.5c1.5-2.300 4.5-3 7-2l-1.5 2.5-4 .5z" fill="#6F7BF0"/><path d="M8 10.5c2-1 4.5-.5 5.5 1 .8 1.300.3 3-1 4-1.300 1-3.5 1.200-5-.5 1.800.7 3.200.2 3.800-.8.600-1.100-.3-2.400-1.800-2.400-.8 0-1.300-.5-1.5-1.300z" fill="#FF9A1E"/></svg><svg class="a" style="left:602px;top:868px" width="24" height="24" viewBox="0 0 24 24"><circle cx="12" cy="12" r="11" fill="#fff"/><path d="M12 1a11 11 0 0 1 9.5 5.5h-9.5a5.5 5.5 0 0 0-5.200 3.700l-3.900-4.700a11 11 0 0 1 9.100-4.5z" fill="#E8453C"/><path d="M21.5 6.5a11 11 0 0 1-9 16.5l4.300-8.200a5.5 5.5 0 0 0 .2-5.300l4.5-3z" fill="#F9BB2D"/><path d="M12.5 23a11 11 0 0 1-9.600-17.5l4 4.800a5.5 5.5 0 0 0 7 7z" fill="#3AA757"/><circle cx="12" cy="12" r="4.5" fill="#4A8AF4" stroke="#fff" stroke-width="1"/></svg><svg class="a" style="left:651px;top:869px" width="24" height="22" viewBox="0 0 24 22"><rect x="9" y="1.5" width="14" height="19" fill="#fff" stroke="#217346"/><path d="M14 5h7M14 8h7M14 11h7M14 14h7M14 17h7M17.5 2v18" stroke="#217346"/><path d="M0 2.5l13-2.5v22l-13-2.5z" fill="#217346"/><text x="6.5" y="15" font-size="10" font-weight="bold" text-anchor="middle" fill="#fff" font-family="Liberation Sans,sans-serif">X</text></svg><svg class="a" style="left:700px;top:868px" width="24" height="24" viewBox="0 0 24 24"><rect x="0" y="0" width="24" height="24" rx="4" fill="#1E90F0"/><path d="M3 4h18v13h-11l-5 4v-4h-2z" fill="#fff"/><text x="12" y="13.5" font-size="7.5" font-weight="bold" text-anchor="middle" fill="#1E90F0" font-family="Liberation Sans,sans-serif">Zalo</text></svg><div class="a" style="left:737px;top:860px;width:48px;height:40px;background:#393D42"></div><svg class="a" style="left:750px;top:869px" width="22" height="22" viewBox="0 0 22 22"><rect x="1" y="1" width="20" height="20" fill="#EEF2EE" stroke="#3E8A45" stroke-width="2"/><rect x="2.5" y="2.5" width="17" height="17" fill="none" stroke="#7FB583"/><path d="M5 4h12v3.5h-1.200l-.6-1.600h-6l4.800 5.100-4.800 5.100h6.200l.6-1.600h1.200v3.5h-12v-1.5l5.200-5.5-5.200-5.5z" fill="#1B4D1E"/></svg><div class="a" style="left:594px;top:898px;width:31px;height:2px;background:#76B9ED"></div><div class="a" style="left:626px;top:898px;width:8px;height:2px;background:#5A8AB4"></div><div class="a" style="left:692px;top:898px;width:40px;height:2px;background:#76B9ED"></div><div class="a" style="left:737px;top:898px;width:48px;height:2px;background:#76B9ED"></div><svg class="a" style="left:1134px;top:871px" width="18" height="18" viewBox="0 0 18 18"><circle cx="11.5" cy="4.5" r="2.5" fill="none" stroke="#fff" stroke-width="1.200"/><path d="M8 12c0-5 7-5 7 0" fill="none" stroke="#fff" stroke-width="1.200"/><circle cx="5.5" cy="8.5" r="2.5" fill="#101317" stroke="#fff" stroke-width="1.200"/><path d="M1.5 16c0-6 8-6 8 0" fill="none" stroke="#fff" stroke-width="1.200"/></svg><svg class="a" style="left:1172px;top:876px" width="13" height="8" viewBox="0 0 13 8"><path d="M1 7l5.5-5.5 5.5 5.5" fill="none" stroke="#fff" stroke-width="1.300"/></svg><svg class="a" style="left:1194px;top:872px" width="18" height="16" viewBox="0 0 18 16"><path d="M1 5.5h3l4-4v13l-4-4h-3z" fill="none" stroke="#fff" stroke-width="1.100"/><path d="M10.5 5.5c1.200 1.5 1.200 3.5 0 5M12.5 3.5c2.200 2.5 2.200 6.5 0 9M14.5 1.5c3.5 4 3.5 9 0 13" fill="none" stroke="#fff" stroke-width="1.100"/></svg><svg class="a" style="left:1220px;top:875px" width="16" height="10" viewBox="0 0 16 10"><rect x="0.5" y="0.5" width="13" height="8" fill="none" stroke="#fff" stroke-width="1.100"/><rect x="14" y="3" width="1.5" height="3" fill="#fff"/><rect x="2" y="2" width="4" height="5" fill="#fff"/></svg><svg class="a" style="left:1245px;top:872px" width="16" height="16" viewBox="0 0 16 16"><path d="M1 12a11 11 0 0 1 11-11M4 13a8 8 0 0 1 8-8M7 14a5 5 0 0 1 5-5" fill="none" stroke="#fff" stroke-width="1.200"/><circle cx="12" cy="13.5" r="1.700" fill="#fff"/></svg><svg class="a" style="left:1266px;top:874px" width="18" height="12" viewBox="0 0 18 12"><path d="M4.5 11.5a4 4 0 0 1-.5-8 5 5 0 0 1 9.5 1 3.5 3.5 0 0 1 0 7z" fill="#fff"/><path d="M9 10v-5M6.5 7l2.5-2.5 2.5 2.5" stroke="#101317" stroke-width="1.400" fill="none"/></svg><div class="tb" style="left:1293px;top:873px;line-height:14px;font-size:11.5px;letter-spacing:-.3px">ENG</div><div class="tb" style="left:1325px;top:864px;width:60px;text-align:center;line-height:14px;font-size:11.5px;letter-spacing:-.3px">10:55 PM</div><div class="tb" style="left:1325px;top:882px;width:60px;text-align:center;line-height:14px;font-size:11.5px;letter-spacing:-.1px">7/11/2018</div><svg class="a" style="left:1398px;top:870px" width="26" height="26" viewBox="0 0 26 26"><path d="M1 1h16v12h-11l-3 3v-3h-2z" fill="#fff"/><path d="M3.5 4h11M3.5 6.5h11M3.5 9h11" stroke="#101317"/><circle cx="16" cy="17" r="6.5" fill="#2A2A2A" stroke="#9A9A9A"/><text x="16" y="20.800" font-size="10" font-weight="bold" text-anchor="middle" fill="#fff" font-family="Liberation Sans,sans-serif">7</text></svg><div class="a" style="left:1435px;top:860px;width:1px;height:40px;background:#6A6A6A"></div>
<div class="a" style="left:449px;top:172px;width:541px;height:514px;box-sizing:border-box;border:1px solid #1883D7;background:#fff;box-shadow:0 4px 14px rgba(0,0,0,.35),0 0 6px rgba(0,0,0,.18)"></div><div class="t" style="left:454px;top:178px;font-size:12px;letter-spacing:-.3px">Tải đơn giá</div><svg class="a" style="left:968px;top:179px" width="12" height="12" viewBox="0 0 12 12"><path d="M1 1l10 10M11 1l-10 10" stroke="#111" stroke-width="1.200" fill="none"/></svg><div class="t sf" style="left:461px;top:207px;font-size:20.5px;line-height:24px;letter-spacing:0;font-weight:bold;color:#747474">Tải đơn giá từ Internet</div><div class="a" style="left:450px;top:244px;width:539px;height:441px;background:#F0F0F0;border-top:1px solid #A0A0A0;box-sizing:border-box"></div><div class="a" style="left:454px;top:248px;width:518px;height:398px;background:#fff;border:1px solid #BDBDBD;border-bottom:none;box-sizing:border-box;overflow:hidden"></div><div class="a" style="left:0;top:249px;width:1440px;height:397px;overflow:hidden"><div class="row" style="top:0px;"><svg width="17" height="16" viewBox="0 0 17 16"><path d="M0.5 3v8.5c0 1.400 2.5 2.300 5.5 2.300s5.5-.9 5.5-2.300v-8.5z" fill="#D5D9DE" stroke="#8E949B"/><path d="M1 5.800c0 1.300 2.300 2.100 5 2.100s5-.8 5-2.100v2.800c0 1.300-2.300 2.100-5 2.100s-5-.8-5-2.100z" fill="#ECEFF2"/><ellipse cx="6" cy="3" rx="5.5" ry="2.300" fill="#F6F8FA" stroke="#8E949B"/><path d="M0.5 5.800c0 1.400 2.5 2.300 5.5 2.300s5.5-.9 5.5-2.300M0.5 8.600c0 1.400 2.5 2.300 5.5 2.300s5.5-.9 5.5-2.300" fill="none" stroke="#9BA1A8"/><path d="M12.300 5.5l-3.300 5.5h2.600l-1.800 4.700 6-6.5h-2.700l2.400-3.700z" fill="#FFC93C" stroke="#D48E16" stroke-width=".7" stroke-linejoin="round"/></svg><span class="n">Bạc Liêu</span><span class="s">(Đã có)</span><span class="b">Tải về</span></div><div class="row" style="top:26px;"><svg width="17" height="16" viewBox="0 0 17 16"><path d="M0.5 3v8.5c0 1.400 2.5 2.300 5.5 2.300s5.5-.9 5.5-2.300v-8.5z" fill="#D5D9DE" stroke="#8E949B"/><path d="M1 5.800c0 1.300 2.300 2.100 5 2.100s5-.8 5-2.100v2.800c0 1.300-2.300 2.100-5 2.100s-5-.8-5-2.100z" fill="#ECEFF2"/><ellipse cx="6" cy="3" rx="5.5" ry="2.300" fill="#F6F8FA" stroke="#8E949B"/><path d="M0.5 5.800c0 1.400 2.5 2.300 5.5 2.300s5.5-.9 5.5-2.300M0.5 8.600c0 1.400 2.5 2.300 5.5 2.300s5.5-.9 5.5-2.300" fill="none" stroke="#9BA1A8"/><path d="M12.300 5.5l-3.300 5.5h2.600l-1.800 4.700 6-6.5h-2.700l2.400-3.700z" fill="#FFC93C" stroke="#D48E16" stroke-width=".7" stroke-linejoin="round"/></svg><span class="n">Bắc Ninh</span><span class="s">(Đã có)</span><span class="b">Tải về</span></div><div class="row" style="top:52px;"><svg width="17" height="16" viewBox="0 0 17 16"><path d="M0.5 3v8.5c0 1.400 2.5 2.300 5.5 2.300s5.5-.9 5.5-2.300v-8.5z" fill="#D5D9DE" stroke="#8E949B"/><path d="M1 5.800c0 1.300 2.300 2.100 5 2.100s5-.8 5-2.100v2.800c0 1.300-2.300 2.100-5 2.100s-5-.8-5-2.100z" fill="#ECEFF2"/><ellipse cx="6" cy="3" rx="5.5" ry="2.300" fill="#F6F8FA" stroke="#8E949B"/><path d="M0.5 5.800c0 1.400 2.5 2.300 5.5 2.300s5.5-.9 5.5-2.300M0.5 8.600c0 1.400 2.5 2.300 5.5 2.300s5.5-.9 5.5-2.300" fill="none" stroke="#9BA1A8"/><path d="M12.300 5.5l-3.300 5.5h2.600l-1.800 4.700 6-6.5h-2.700l2.400-3.700z" fill="#FFC93C" stroke="#D48E16" stroke-width=".7" stroke-linejoin="round"/></svg><span class="n">Bến Tre</span><span class="s">(Đã có)</span><span class="b">Tải về</span></div><div class="row" style="top:78px;"><svg width="17" height="16" viewBox="0 0 17 16"><path d="M0.5 3v8.5c0 1.400 2.5 2.300 5.5 2.300s5.5-.9 5.5-2.300v-8.5z" fill="#D5D9DE" stroke="#8E949B"/><path d="M1 5.800c0 1.300 2.300 2.100 5 2.100s5-.8 5-2.100v2.800c0 1.300-2.300 2.100-5 2.100s-5-.8-5-2.100z" fill="#ECEFF2"/><ellipse cx="6" cy="3" rx="5.5" ry="2.300" fill="#F6F8FA" stroke="#8E949B"/><path d="M0.5 5.800c0 1.400 2.5 2.300 5.5 2.300s5.5-.9 5.5-2.300M0.5 8.600c0 1.400 2.5 2.300 5.5 2.300s5.5-.9 5.5-2.300" fill="none" stroke="#9BA1A8"/><path d="M12.300 5.5l-3.300 5.5h2.600l-1.800 4.700 6-6.5h-2.700l2.400-3.700z" fill="#FFC93C" stroke="#D48E16" stroke-width=".7" stroke-linejoin="round"/></svg><span class="n">Bình Định</span><span class="s">(Đã có)</span><span class="b">Tải về</span></div><div class="row" style="top:104px;background:#F5F5F5;"><svg width="17" height="16" viewBox="0 0 17 16"><path d="M0.5 3v8.5c0 1.400 2.5 2.300 5.5 2.300s5.5-.9 5.5-2.300v-8.5z" fill="#D5D9DE" stroke="#8E949B"/><path d="M1 5.800c0 1.300 2.300 2.100 5 2.100s5-.8 5-2.100v2.800c0 1.300-2.300 2.100-5 2.100s-5-.8-5-2.100z" fill="#ECEFF2"/><ellipse cx="6" cy="3" rx="5.5" ry="2.300" fill="#F6F8FA" stroke="#8E949B"/><path d="M0.5 5.800c0 1.400 2.5 2.300 5.5 2.300s5.5-.9 5.5-2.300M0.5 8.600c0 1.400 2.5 2.300 5.5 2.300s5.5-.9 5.5-2.300" fill="none" stroke="#9BA1A8"/><path d="M12.300 5.5l-3.300 5.5h2.600l-1.800 4.700 6-6.5h-2.700l2.400-3.700z" fill="#FFC93C" stroke="#D48E16" stroke-width=".7" stroke-linejoin="round"/></svg><span class="n">Bình Dương</span><span class="s">(Đã có)</span><span class="b">Tải về</span></div><div class="row" style="top:130px;"><svg width="17" height="16" viewBox="0 0 17 16"><path d="M0.5 3v8.5c0 1.400 2.5 2.300 5.5 2.300s5.5-.9 5.5-2.300v-8.5z" fill="#D5D9DE" stroke="#8E949B"/><path d="M1 5.800c0 1.300 2.300 2.100 5 2.100s5-.8 5-2.100v2.800c0 1.300-2.300 2.100-5 2.100s-5-.8-5-2.100z" fill="#ECEFF2"/><ellipse cx="6" cy="3" rx="5.5" ry="2.300" fill="#F6F8FA" stroke="#8E949B"/><path d="M0.5 5.800c0 1.400 2.5 2.300 5.5 2.300s5.5-.9 5.5-2.300M0.5 8.600c0 1.400 2.5 2.300 5.5 2.300s5.5-.9 5.5-2.300" fill="none" stroke="#9BA1A8"/><path d="M12.300 5.5l-3.300 5.5h2.600l-1.800 4.700 6-6.5h-2.700l2.400-3.700z" fill="#FFC93C" stroke="#D48E16" stroke-width=".7" stroke-linejoin="round"/></svg><span class="n">Bình Phước</span><span class="s">(Đã có)</span><span class="b">Tải về</span></div><div class="row" style="top:156px;background:#F5F5F5;"><svg width="17" height="16" viewBox="0 0 17 16"><path d="M0.5 3v8.5c0 1.400 2.5 2.300 5.5 2.300s5.5-.9 5.5-2.300v-8.5z" fill="#D5D9DE" stroke="#8E949B"/><path d="M1 5.800c0 1.300 2.300 2.100 5 2.100s5-.8 5-2.100v2.800c0 1.300-2.300 2.100-5 2.100s-5-.8-5-2.100z" fill="#ECEFF2"/><ellipse cx="6" cy="3" rx="5.5" ry="2.300" fill="#F6F8FA" stroke="#8E949B"/><path d="M0.5 5.800c0 1.400 2.5 2.300 5.5 2.300s5.5-.9 5.5-2.300M0.5 8.600c0 1.400 2.5 2.300 5.5 2.300s5.5-.9 5.5-2.300" fill="none" stroke="#9BA1A8"/><path d="M12.300 5.5l-3.300 5.5h2.600l-1.800 4.700 6-6.5h-2.700l2.400-3.700z" fill="#FFC93C" stroke="#D48E16" stroke-width=".7" stroke-linejoin="round"/></svg><span class="n">Bình Thuận</span><span class="s">(Đã có)</span><span class="a" style="left:407px;top:6px;font-size:11.5px;line-height:14px;letter-spacing:.3px;font-weight:bold;color:#0B8A1C;white-space:nowrap">Đã tải về máy.</span></div><div class="row" style="top:182px;"><svg width="17" height="16" viewBox="0 0 17 16"><path d="M0.5 3v8.5c0 1.400 2.5 2.300 5.5 2.300s5.5-.9 5.5-2.300v-8.5z" fill="#D5D9DE" stroke="#8E949B"/><path d="M1 5.800c0 1.300 2.300 2.100 5 2.100s5-.8 5-2.100v2.800c0 1.300-2.300 2.100-5 2.100s-5-.8-5-2.100z" fill="#ECEFF2"/><ellipse cx="6" cy="3" rx="5.5" ry="2.300" fill="#F6F8FA" stroke="#8E949B"/><path d="M0.5 5.800c0 1.400 2.5 2.300 5.5 2.300s5.5-.9 5.5-2.300M0.5 8.600c0 1.400 2.5 2.300 5.5 2.300s5.5-.9 5.5-2.300" fill="none" stroke="#9BA1A8"/><path d="M12.300 5.5l-3.300 5.5h2.600l-1.800 4.700 6-6.5h-2.700l2.400-3.700z" fill="#FFC93C" stroke="#D48E16" stroke-width=".7" stroke-linejoin="round"/></svg><span class="n">Cà Mau</span><span class="s">(Đã có)</span><span class="b">Tải về</span></div><div class="row" style="top:208px;"><svg width="17" height="16" viewBox="0 0 17 16"><path d="M0.5 3v8.5c0 1.400 2.5 2.300 5.5 2.300s5.5-.9 5.5-2.300v-8.5z" fill="#D5D9DE" stroke="#8E949B"/><path d="M1 5.800c0 1.300 2.300 2.100 5 2.100s5-.8 5-2.100v2.800c0 1.300-2.300 2.100-5 2.100s-5-.8-5-2.100z" fill="#ECEFF2"/><ellipse cx="6" cy="3" rx="5.5" ry="2.300" fill="#F6F8FA" stroke="#8E949B"/><path d="M0.5 5.800c0 1.400 2.5 2.300 5.5 2.300s5.5-.9 5.5-2.300M0.5 8.600c0 1.400 2.5 2.300 5.5 2.300s5.5-.9 5.5-2.300" fill="none" stroke="#9BA1A8"/><path d="M12.300 5.5l-3.300 5.5h2.600l-1.800 4.700 6-6.5h-2.700l2.400-3.700z" fill="#FFC93C" stroke="#D48E16" stroke-width=".7" stroke-linejoin="round"/></svg><span class="n">Cần Thơ</span><span class="s">(Đã có)</span><span class="b">Tải về</span></div><div class="row" style="top:234px;"><svg width="17" height="16" viewBox="0 0 17 16"><path d="M0.5 3v8.5c0 1.400 2.5 2.300 5.5 2.300s5.5-.9 5.5-2.300v-8.5z" fill="#D5D9DE" stroke="#8E949B"/><path d="M1 5.800c0 1.300 2.300 2.100 5 2.100s5-.8 5-2.100v2.800c0 1.300-2.300 2.100-5 2.100s-5-.8-5-2.100z" fill="#ECEFF2"/><ellipse cx="6" cy="3" rx="5.5" ry="2.300" fill="#F6F8FA" stroke="#8E949B"/><path d="M0.5 5.800c0 1.400 2.5 2.300 5.5 2.300s5.5-.9 5.5-2.300M0.5 8.600c0 1.400 2.5 2.300 5.5 2.300s5.5-.9 5.5-2.300" fill="none" stroke="#9BA1A8"/><path d="M12.300 5.5l-3.300 5.5h2.600l-1.800 4.700 6-6.5h-2.700l2.400-3.700z" fill="#FFC93C" stroke="#D48E16" stroke-width=".7" stroke-linejoin="round"/></svg><span class="n">Cao Bằng</span><span class="s">(Đã có)</span><span class="b">Tải về</span></div><div class="row" style="top:260px;"><svg width="17" height="16" viewBox="0 0 17 16"><path d="M0.5 3v8.5c0 1.400 2.5 2.300 5.5 2.300s5.5-.9 5.5-2.300v-8.5z" fill="#D5D9DE" stroke="#8E949B"/><path d="M1 5.800c0 1.300 2.300 2.100 5 2.100s5-.8 5-2.100v2.800c0 1.300-2.300 2.100-5 2.100s-5-.8-5-2.100z" fill="#ECEFF2"/><ellipse cx="6" cy="3" rx="5.5" ry="2.300" fill="#F6F8FA" stroke="#8E949B"/><path d="M0.5 5.800c0 1.400 2.5 2.300 5.5 2.300s5.5-.9 5.5-2.300M0.5 8.600c0 1.400 2.5 2.300 5.5 2.300s5.5-.9 5.5-2.300" fill="none" stroke="#9BA1A8"/><path d="M12.300 5.5l-3.300 5.5h2.600l-1.800 4.700 6-6.5h-2.700l2.400-3.700z" fill="#FFC93C" stroke="#D48E16" stroke-width=".7" stroke-linejoin="round"/></svg><span class="n">Chuyên ngành</span><span class="s">(Đã có)</span><span class="b">Tải về</span></div><div class="row" style="top:286px;"><svg width="17" height="16" viewBox="0 0 17 16"><path d="M0.5 3v8.5c0 1.400 2.5 2.300 5.5 2.300s5.5-.9 5.5-2.300v-8.5z" fill="#D5D9DE" stroke="#8E949B"/><path d="M1 5.800c0 1.300 2.300 2.100 5 2.100s5-.8 5-2.100v2.800c0 1.300-2.300 2.100-5 2.100s-5-.8-5-2.100z" fill="#ECEFF2"/><ellipse cx="6" cy="3" rx="5.5" ry="2.300" fill="#F6F8FA" stroke="#8E949B"/><path d="M0.5 5.800c0 1.400 2.5 2.300 5.5 2.300s5.5-.9 5.5-2.300M0.5 8.600c0 1.400 2.5 2.300 5.5 2.300s5.5-.9 5.5-2.300" fill="none" stroke="#9BA1A8"/><path d="M12.300 5.5l-3.300 5.5h2.600l-1.800 4.700 6-6.5h-2.700l2.400-3.700z" fill="#FFC93C" stroke="#D48E16" stroke-width=".7" stroke-linejoin="round"/></svg><span class="n">Công ich</span><span class="s">(Đã có)</span><span class="b">Tải về</span></div><div class="row" style="top:312px;"><svg width="17" height="16" viewBox="0 0 17 16"><path d="M0.5 3v8.5c0 1.400 2.5 2.300 5.5 2.300s5.5-.9 5.5-2.300v-8.5z" fill="#D5D9DE" stroke="#8E949B"/><path d="M1 5.800c0 1.300 2.300 2.100 5 2.100s5-.8 5-2.100v2.800c0 1.300-2.300 2.100-5 2.100s-5-.8-5-2.100z" fill="#ECEFF2"/><ellipse cx="6" cy="3" rx="5.5" ry="2.300" fill="#F6F8FA" stroke="#8E949B"/><path d="M0.5 5.800c0 1.400 2.5 2.300 5.5 2.300s5.5-.9 5.5-2.300M0.5 8.600c0 1.400 2.5 2.300 5.5 2.300s5.5-.9 5.5-2.300" fill="none" stroke="#9BA1A8"/><path d="M12.300 5.5l-3.300 5.5h2.600l-1.800 4.700 6-6.5h-2.700l2.400-3.700z" fill="#FFC93C" stroke="#D48E16" stroke-width=".7" stroke-linejoin="round"/></svg><span class="n">Đắc Lắk</span><span class="s">(Đã có)</span><span class="b">Tải về</span></div><div class="row" style="top:338px;"><svg width="17" height="16" viewBox="0 0 17 16"><path d="M0.5 3v8.5c0 1.400 2.5 2.300 5.5 2.300s5.5-.9 5.5-2.300v-8.5z" fill="#D5D9DE" stroke="#8E949B"/><path d="M1 5.800c0 1.300 2.300 2.100 5 2.100s5-.8 5-2.100v2.800c0 1.300-2.300 2.100-5 2.100s-5-.8-5-2.100z" fill="#ECEFF2"/><ellipse cx="6" cy="3" rx="5.5" ry="2.300" fill="#F6F8FA" stroke="#8E949B"/><path d="M0.5 5.800c0 1.400 2.5 2.300 5.5 2.300s5.5-.9 5.5-2.300M0.5 8.600c0 1.400 2.5 2.300 5.5 2.300s5.5-.9 5.5-2.300" fill="none" stroke="#9BA1A8"/><path d="M12.300 5.5l-3.300 5.5h2.600l-1.800 4.700 6-6.5h-2.700l2.400-3.700z" fill="#FFC93C" stroke="#D48E16" stroke-width=".7" stroke-linejoin="round"/></svg><span class="n">Đăknông</span><span class="s">(Đã có)</span><span class="b">Tải về</span></div><div class="row" style="top:364px;"><svg width="17" height="16" viewBox="0 0 17 16"><path d="M0.5 3v8.5c0 1.400 2.5 2.300 5.5 2.300s5.5-.9 5.5-2.300v-8.5z" fill="#D5D9DE" stroke="#8E949B"/><path d="M1 5.800c0 1.300 2.300 2.100 5 2.100s5-.8 5-2.100v2.800c0 1.300-2.300 2.100-5 2.100s-5-.8-5-2.100z" fill="#ECEFF2"/><ellipse cx="6" cy="3" rx="5.5" ry="2.300" fill="#F6F8FA" stroke="#8E949B"/><path d="M0.5 5.800c0 1.400 2.5 2.300 5.5 2.300s5.5-.9 5.5-2.300M0.5 8.600c0 1.400 2.5 2.300 5.5 2.300s5.5-.9 5.5-2.300" fill="none" stroke="#9BA1A8"/><path d="M12.300 5.5l-3.300 5.5h2.600l-1.800 4.700 6-6.5h-2.700l2.400-3.700z" fill="#FFC93C" stroke="#D48E16" stroke-width=".7" stroke-linejoin="round"/></svg><span class="n">Đà Nẵng</span><span class="s">(Đã có)</span><span class="b">Tải về</span></div><div class="row" style="top:390px;"><svg width="17" height="16" viewBox="0 0 17 16"><path d="M0.5 3v8.5c0 1.400 2.5 2.300 5.5 2.300s5.5-.9 5.5-2.300v-8.5z" fill="#D5D9DE" stroke="#8E949B"/><path d="M1 5.800c0 1.300 2.300 2.100 5 2.100s5-.8 5-2.100v2.800c0 1.300-2.300 2.100-5 2.100s-5-.8-5-2.100z" fill="#ECEFF2"/><ellipse cx="6" cy="3" rx="5.5" ry="2.300" fill="#F6F8FA" stroke="#8E949B"/><path d="M0.5 5.800c0 1.400 2.5 2.300 5.5 2.300s5.5-.9 5.5-2.300M0.5 8.600c0 1.400 2.5 2.300 5.5 2.300s5.5-.9 5.5-2.300" fill="none" stroke="#9BA1A8"/><path d="M12.300 5.5l-3.300 5.5h2.600l-1.800 4.700 6-6.5h-2.700l2.400-3.700z" fill="#FFC93C" stroke="#D48E16" stroke-width=".7" stroke-linejoin="round"/></svg><span class="n">Điện Biên</span><span class="s">(Đã có)</span><span class="b">Tải về</span></div></div><div class="a" style="left:972px;top:247px;width:17px;height:399px;background:#F0F0F0"></div><div class="a" style="left:973px;top:275px;width:15px;height:71px;background:#CDCDCD"></div><svg class="a" style="left:976px;top:251px" width="9" height="6" viewBox="0 0 9 6"><path d="M1 5l3.5-3.5 3.5 3.5" fill="none" stroke="#505050" stroke-width="2"/></svg><svg class="a" style="left:976px;top:635px" width="9" height="6" viewBox="0 0 9 6"><path d="M1 1l3.5 3.5 3.5-3.5" fill="none" stroke="#505050" stroke-width="2"/></svg><div class="a" style="left:450px;top:646px;width:539px;height:39px;background:#F0F0F0;border-top:1px solid #DADADA;box-sizing:border-box"></div><div class="a" style="left:900px;top:653px;width:80px;height:22px;box-sizing:border-box;border:1px solid #ADADAD;background:#E1E1E1;text-align:center;line-height:20px;font-size:11px">Đóng</div>
<div class="t" style="left:1143px;top:775px;font-size:20px;line-height:24px;letter-spacing:-.05px;color:#C4C4C4">Activate Windows</div><div class="t" style="left:1143px;top:800px;font-size:15px;line-height:18px;letter-spacing:.0px;color:#C4C4C4">Go to Settings to activate Windows.</div><div class="red" style="left:460px;top:4px">Bước 1</div><div class="red" style="left:920px;top:1px">Bước 3: Chọn đơn giá</div><div class="red" style="left:920px;top:32px">Bình Thuân năm 2018</div><div class="red" style="left:672px;top:327px">Bước 2: Tải đơn giá</div><div class="red" style="left:672px;top:358px">Bình Thuận</div><svg class="a" style="left:0;top:0" width="1440" height="900" viewBox="0 0 1440 900"><g fill="none" stroke="#E8161F" stroke-width="5.4"><ellipse cx="615" cy="61.3" rx="47.2" ry="30.8"/><ellipse cx="808.7" cy="59.2" rx="108.5" ry="25.7"/><path d="M439.5 413.3C439.5 399.1 566.4 387.6 723 387.6C810 387.6 900 394.5 970 404.4C990 407.4 1006.5 410 1006.5 413.7C1006.5 417.4 990 420 970 423C900 432.6 810 438.0 723 438.0C566.4 438.0 439.5 426.9 439.5 413.3Z" stroke-width="4.8" stroke-linejoin="round"/></g></svg></body></html>
